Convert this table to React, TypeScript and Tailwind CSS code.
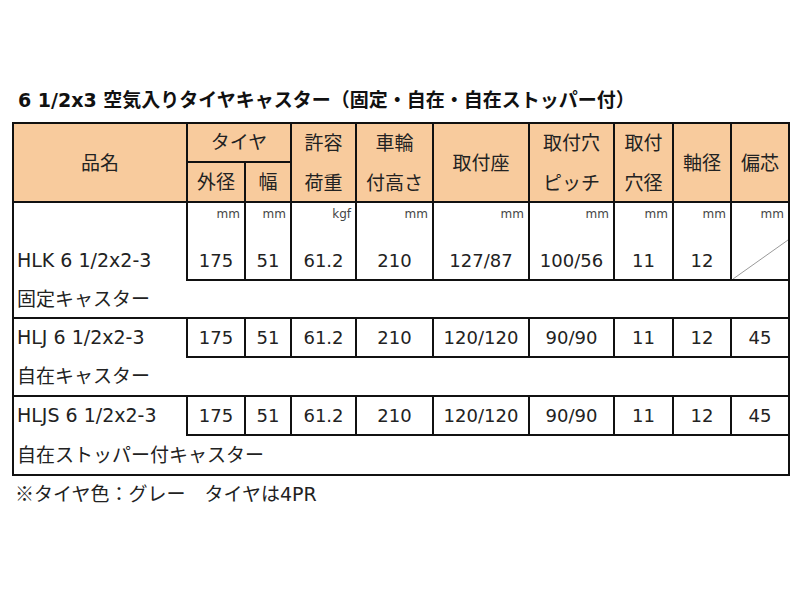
import React from "react";

const COLS = "grid grid-cols-[174px_58px_46px_65px_77px_96px_85px_59px_58px_56px]";

type Row = {
  code: string;
  label: string;
  values: string[];
  units?: string[];
};

const rows: Row[] = [
  {
    code: "HLK 6 1/2x2-3",
    label: "固定キャスター",
    values: ["175", "51", "61.2", "210", "127/87", "100/56", "11", "12", ""],
    units: ["mm", "mm", "kgf", "mm", "mm", "mm", "mm", "mm", "mm"],
  },
  {
    code: "HLJ 6 1/2x2-3",
    label: "自在キャスター",
    values: ["175", "51", "61.2", "210", "120/120", "90/90", "11", "12", "45"],
  },
  {
    code: "HLJS 6 1/2x2-3",
    label: "自在ストッパー付キャスター",
    values: ["175", "51", "61.2", "210", "120/120", "90/90", "11", "12", "45"],
  },
];

function HeaderCell({ lines, last }: { lines: string[]; last?: boolean }) {
  return (
    <div
      className={
        "row-span-2 flex flex-col items-center justify-center border-b-2 border-[#111] bg-[#f8cb9d] text-[19px] text-[#222] " +
        (last ? "" : "border-r-2")
      }
    >
      {lines.map((l) => (
        <div key={l} className="leading-[40px]">
          {l}
        </div>
      ))}
    </div>
  );
}

export default function App() {
  return (
    <div className="min-h-[600px] w-[800px] bg-white pt-[86px] font-['DejaVu_Sans','Noto_Sans_CJK_JP',sans-serif]">
      <div className="ml-[18px] h-[28px] text-[19px] font-bold leading-[28px] text-[#111]">
        6 1/2x3 空気入りタイヤキャスター（固定・自在・自在ストッパー付）
      </div>
      <div className="ml-[12px] mt-[8px] w-[778px] border-2 border-[#111] text-[#222]">
        <div className={COLS + " grid-rows-[39px_40px]"}>
          <HeaderCell lines={["品名"]} />
          <div className="col-span-2 flex items-center justify-center border-b-2 border-r-2 border-[#111] bg-[#f8cb9d] text-[19px]">
            タイヤ
          </div>
          <HeaderCell lines={["許容", "荷重"]} />
          <HeaderCell lines={["車輪", "付高さ"]} />
          <HeaderCell lines={["取付座"]} />
          <HeaderCell lines={["取付穴", "ピッチ"]} />
          <HeaderCell lines={["取付", "穴径"]} />
          <HeaderCell lines={["軸径"]} />
          <HeaderCell lines={["偏芯"]} last />
          <div className="flex items-center justify-center border-b-2 border-r-2 border-[#111] bg-[#f8cb9d] text-[19px]">
            外径
          </div>
          <div className="flex items-center justify-center border-b-2 border-r-2 border-[#111] bg-[#f8cb9d] text-[19px]">
            幅
          </div>
        </div>

        {rows.map((r, ri) => {
          const hasUnits = !!r.units;
          const last = ri === rows.length - 1;
          return (
            <div
              key={r.code}
              className={
                COLS +
                " " +
                (hasUnits ? "grid-rows-[78px_38px]" : ri === 1 ? "grid-rows-[39px_39px]" : "grid-rows-[39px_38px]")
              }
            >
              <div className="flex flex-col justify-end border-r-2 border-[#111]">
                <div className="flex h-[39px] items-center pl-[3px] pb-[2px] text-[19px]">{r.code}</div>
              </div>
              {r.values.map((v, i) => (
                <div
                  key={i}
                  className={
                    "relative flex flex-col justify-end border-b-2 border-[#111] " +
                    (i === r.values.length - 1 ? "" : "border-r-2")
                  }
                >
                  {hasUnits && (
                    <div className="absolute right-[4px] top-[3px] text-[12px] leading-[16px] text-[#444]">
                      {r.units![i]}
                    </div>
                  )}
                  {hasUnits && i === r.values.length - 1 && (
                    <svg className="absolute left-0 top-0" width="56" height="76" viewBox="0 0 56 76">
                      <line x1="1" y1="76" x2="56" y2="37" stroke="#9a9a9a" strokeWidth="1" />
                    </svg>
                  )}
                  <div className="flex h-[37px] items-center justify-center text-[18px]">{v}</div>
                </div>
              ))}
              <div
                className={
                  "col-span-10 flex items-center pl-[3px] text-[19px] " +
                  (last ? "" : "border-b-2 border-[#111]")
                }
              >
                {r.label}
              </div>
            </div>
          );
        })}
      </div>
      <div className="ml-[15px] mt-[4px] text-[19px] leading-[26px] text-[#222]">
        <span className="font-['Noto_Sans_CJK_JP',sans-serif]">※</span>タイヤ色：グレー　タイヤは4PR
      </div>
    </div>
  );
}
